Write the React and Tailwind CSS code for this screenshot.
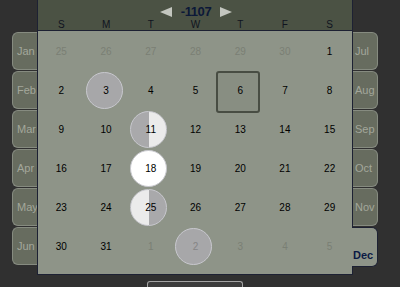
import React from 'react';

const leftMonths = ['Jan', 'Feb', 'Mar', 'Apr', 'May', 'Jun'];
const rightMonths = ['Jul', 'Aug', 'Sep', 'Oct', 'Nov', 'Dec'];
const activeMonth = 'Dec';
const weekDays = ['S', 'M', 'T', 'W', 'T', 'F', 'S'];

// other: day from neighbour month, mark: moon phase / today
const weeks = [
    [{ d: 25, other: true }, { d: 26, other: true }, { d: 27, other: true }, { d: 28, other: true }, { d: 29, other: true }, { d: 30, other: true }, { d: 1 }],
    [{ d: 2 }, { d: 3, mark: 'new' }, { d: 4 }, { d: 5 }, { d: 6, mark: 'today' }, { d: 7 }, { d: 8 }],
    [{ d: 9 }, { d: 10 }, { d: 11, mark: 'first' }, { d: 12 }, { d: 13 }, { d: 14 }, { d: 15 }],
    [{ d: 16 }, { d: 17 }, { d: 18, mark: 'full' }, { d: 19 }, { d: 20 }, { d: 21 }, { d: 22 }],
    [{ d: 23 }, { d: 24 }, { d: 25, mark: 'last' }, { d: 26 }, { d: 27 }, { d: 28 }, { d: 29 }],
    [{ d: 30 }, { d: 31 }, { d: 1, other: true }, { d: 2, other: true, mark: 'new' }, { d: 3, other: true }, { d: 4, other: true }, { d: 5, other: true }],
];

const moonStyles = {
    new: 'bg-[#a7a7a9]',
    first: 'bg-[linear-gradient(to_right,#a9a9ab_50%,#ebebeb_50%)]',
    full: 'bg-white',
    last: 'bg-[linear-gradient(to_right,#ebebeb_50%,#a9a9ab_50%)]',
};

function DayCell({ day }) {
    const textColor = day.other ? 'text-[#7a7f74]' : 'text-black';

    if (day.mark === 'today') {
        return (
            <div className="flex h-[39px] items-center justify-center">
                <div className="-ml-[4px] mt-[3px] flex h-[42px] w-[44px] shrink-0 items-center justify-center rounded-[3px] border-2 border-[#484d43] bg-[#888e82] pb-[3px] pl-[4px] text-black">
                    {day.d}
                </div>
            </div>
        );
    }

    if (day.mark) {
        const numColor = day.other ? 'text-[#858585]' : 'text-black';
        return (
            <div className="flex h-[39px] items-center justify-center">
                <div className={`-ml-[4px] flex h-[37px] w-[37px] shrink-0 items-center justify-center rounded-full border border-[#c8c8ce] pl-[4px] ${moonStyles[day.mark]} ${numColor}`}>
                    {day.d}
                </div>
            </div>
        );
    }

    return (
        <div className={`flex h-[39px] items-center justify-center ${textColor}`}>
            {day.d}
        </div>
    );
}

function Triangle({ dir }) {
    return (
        <svg width="12" height="10" viewBox="0 0 12 10">
            {dir === 'left'
                ? <polygon points="0,5 12,0 12,10" fill="#c3c6bf" />
                : <polygon points="0,0 12,5 0,10" fill="#c3c6bf" />}
        </svg>
    );
}

export default function App() {
    return (
        <div className="flex h-[287px] w-[400px] overflow-hidden bg-[#303030] pl-[12px] font-['Liberation_Sans',Arial,sans-serif]">
            {/* left month tabs */}
            <div className="flex w-[25px] shrink-0 flex-col gap-[1px] pt-[32px]">
                {leftMonths.map((m) => (
                    <div
                        key={m}
                        className="flex h-[38px] items-center whitespace-nowrap rounded-l-[6px] border border-r-0 border-[#868b80] bg-[#676c5f] pl-[4px] text-[11px] text-[#a3a79b]"
                    >
                        {m}
                    </div>
                ))}
            </div>

            {/* calendar */}
            <div className="flex w-[316px] shrink-0 flex-col">
                <div className="relative z-10 flex h-[277px] flex-col border-x border-b border-[#1d2133]">
                    <div className="h-[31px] border-b border-[#1d2133] bg-[#4b5244]">
                        <div className="mt-[5px] flex h-[14px] items-center justify-center pl-[2px]">
                            <Triangle dir="left" />
                            <span className="mx-[9px] text-[13px] font-bold leading-[14px] tracking-[-0.4px] text-[#0c1838]">-1107</span>
                            <Triangle dir="right" />
                        </div>
                        <div className="grid h-[12px] grid-cols-7 pl-[1px] text-[10px] leading-[12px] text-[#10141f]">
                            {weekDays.map((w, i) => (
                                <div key={i} className="text-center">{w}</div>
                            ))}
                        </div>
                    </div>
                    <div className="flex-1 bg-[#8e9488] pl-[1px] pt-[1px] text-[10px]">
                        <div className="grid grid-cols-7">
                            {weeks.flat().map((day, i) => (
                                <DayCell key={i} day={day} />
                            ))}
                        </div>
                    </div>
                </div>
                <div className="mx-auto mt-[6px] h-[6px] w-[96px] rounded-t-[3px] border-x border-t border-[#a3a3a3] bg-[#3c3c3c]" />
            </div>

            {/* right month tabs */}
            <div className="flex w-[25px] shrink-0 flex-col gap-[1px] pt-[32px]">
                {rightMonths.map((m) =>
                    m === activeMonth ? (
                        <div
                            key={m}
                            className="relative z-20 -ml-[1px] flex h-[40px] w-[26px] items-center rounded-r-[6px] border border-l-0 border-[#1d2133] bg-[#8e9488] pl-[1px] pt-[17px] text-[11px] font-bold text-[#0c1a44]"
                        >
                            {m}
                        </div>
                    ) : (
                        <div
                            key={m}
                            className="flex h-[38px] items-center rounded-r-[6px] border border-l-0 border-[#868b80] bg-[#676c5f] pl-[2px] text-[11px] text-[#a3a79b]"
                        >
                            {m}
                        </div>
                    )
                )}
            </div>
        </div>
    );
}
